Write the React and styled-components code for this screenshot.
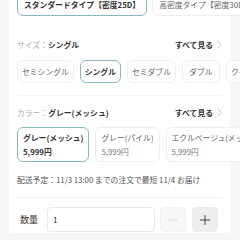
import React, { useState } from 'react';
import styled, { createGlobalStyle } from 'styled-components';

const GlobalStyle = createGlobalStyle`
	html, body {
		margin: 0;
		padding: 0;
		background: #f6f6f6;
		overflow: hidden;
	}
	body {
		font-family: "Noto Sans CJK JP", "Noto Sans", sans-serif;
		color: #333;
	}
`;

const Card = styled.div`
	margin-left: 9px;
	width: 221px;
	height: 240px;
	padding: 0 8px;
	box-sizing: border-box;
	background: #fff;
	overflow: visible;
`;

const ChipRow = styled.div`
	display: flex;
	gap: ${p => p.$gap || 6}px;
	margin-top: ${p => p.$top || 0}px;
	white-space: nowrap;
	width: max-content;
`;

const Chip = styled.div`
	display: flex;
	flex-direction: column;
	justify-content: center;
	align-items: ${p => (p.$tall ? 'flex-start' : 'center')};
	box-sizing: border-box;
	height: ${p => (p.$tall ? 35 : 23)}px;
	min-width: 38px;
	padding: 0 ${p => p.$pad || 4}px;
	border: 1px solid ${p => (p.$active ? '#86b9c2' : '#eeeeee')};
	border-radius: 6px;
	background: #fff;
	font-size: 7.8px;
	line-height: 14px;
	color: ${p => (p.$active ? '#333' : '#666')};
	font-weight: ${p => (p.$active ? 700 : 400)};
`;

const Price = styled.span`
	color: ${p => (p.$active ? '#333' : '#777')};
`;

const Header = styled.div`
	display: flex;
	align-items: center;
	justify-content: space-between;
	height: 12px;
	margin-top: ${p => p.$top}px;
	font-size: 7.8px;
`;

const Label = styled.span`
	color: #aaa;
	b {
		color: #333;
		font-weight: 700;
	}
`;

const SeeAll = styled.span`
	display: flex;
	align-items: center;
	gap: 4px;
	font-weight: 700;
	color: #333;
`;

const Divider = styled.div`
	height: 1px;
	background: #f1f1f1;
	margin-top: ${p => p.$top}px;
`;

const Delivery = styled.div`
	margin-top: 12px;
	height: 12px;
	line-height: 12px;
	font-size: 7.8px;
	color: #555;
	white-space: nowrap;
`;

const QtyRow = styled.div`
	display: flex;
	align-items: center;
	margin-top: 9px;
	height: 25px;
`;

const QtyLabel = styled.span`
	width: 27px;
	padding-left: 3px;
	font-size: 9px;
	color: #333;
`;

const QtyInput = styled.input`
	box-sizing: border-box;
	width: 108px;
	height: 25px;
	margin: 0 5px 0 0;
	padding: 0 5px;
	border: 1px solid #ebebeb;
	border-radius: 4px;
	font-family: inherit;
	font-size: 8px;
	color: #333;
	outline: none;
`;

const StepButton = styled.button`
	display: flex;
	align-items: center;
	justify-content: center;
	box-sizing: border-box;
	width: 26px;
	height: 25px;
	margin-right: ${p => p.$mr || 0}px;
	padding: 0;
	border: 1px solid ${p => (p.disabled ? '#f0f0f0' : '#ececec')};
	border-radius: 4px;
	background: ${p => (p.disabled ? '#f7f7f7' : '#eeeeee')};
`;

const Chevron = () => (
	<svg width="5" height="9" viewBox="0 0 5 9">
		<path d="M0.6 0.6 L4.2 4.5 L0.6 8.4" fill="none" stroke="#bbb" strokeWidth="0.9" />
	</svg>
);

const sizes = ['セミシングル', 'シングル', 'セミダブル', 'ダブル', 'クイーン'];
const colors = [
	{ name: 'グレー(メッシュ)', price: '5,999円' },
	{ name: 'グレー(パイル)', price: '5,999円' },
	{ name: 'エクルベージュ(メッシュ)', price: '5,999円' },
];

const App = () => {
	const [qty, setQty] = useState('1');

	return (
		<>
			<GlobalStyle />
			<Card>
				<ChipRow $top={-7} $gap={5}>
					<Chip $active $pad={6}>スタンダードタイプ【密度25D】</Chip>
					<Chip $pad={6}>高密度タイプ【密度30D】</Chip>
				</ChipRow>

				<Header $top={22}>
					<Label>サイズ：<b>シングル</b></Label>
					<SeeAll>すべて見る <Chevron /></SeeAll>
				</Header>
				<ChipRow $top={10}>
					{sizes.map(s => (
						<Chip key={s} $active={s === 'シングル'}>{s}</Chip>
					))}
				</ChipRow>

				<Divider $top={12} />

				<Header $top={10}>
					<Label>カラー：<b>グレー(メッシュ)</b></Label>
					<SeeAll>すべて見る <Chevron /></SeeAll>
				</Header>
				<ChipRow $top={9}>
					{colors.map((c, i) => (
						<Chip key={c.name} $tall $pad={5} $active={i === 0}>
							<span>{c.name}</span>
							<Price $active={i === 0}>{c.price}</Price>
						</Chip>
					))}
				</ChipRow>

				<Delivery>配送予定：11/3 13:00 までの注文で最短 11/4 お届け</Delivery>

				<Divider $top={11} />

				<QtyRow>
					<QtyLabel>数量</QtyLabel>
					<QtyInput value={qty} onChange={e => setQty(e.target.value)} />
					<StepButton disabled $mr={6}>
						<svg width="12" height="12" viewBox="0 0 12 12">
							<path d="M1 6 H11" stroke="#dedede" strokeWidth="1" />
						</svg>
					</StepButton>
					<StepButton>
						<svg width="12" height="12" viewBox="0 0 12 12">
							<path d="M1 6 H11 M6 1 V11" stroke="#444" strokeWidth="1" />
						</svg>
					</StepButton>
				</QtyRow>
			</Card>
		</>
	);
};

export default App;
